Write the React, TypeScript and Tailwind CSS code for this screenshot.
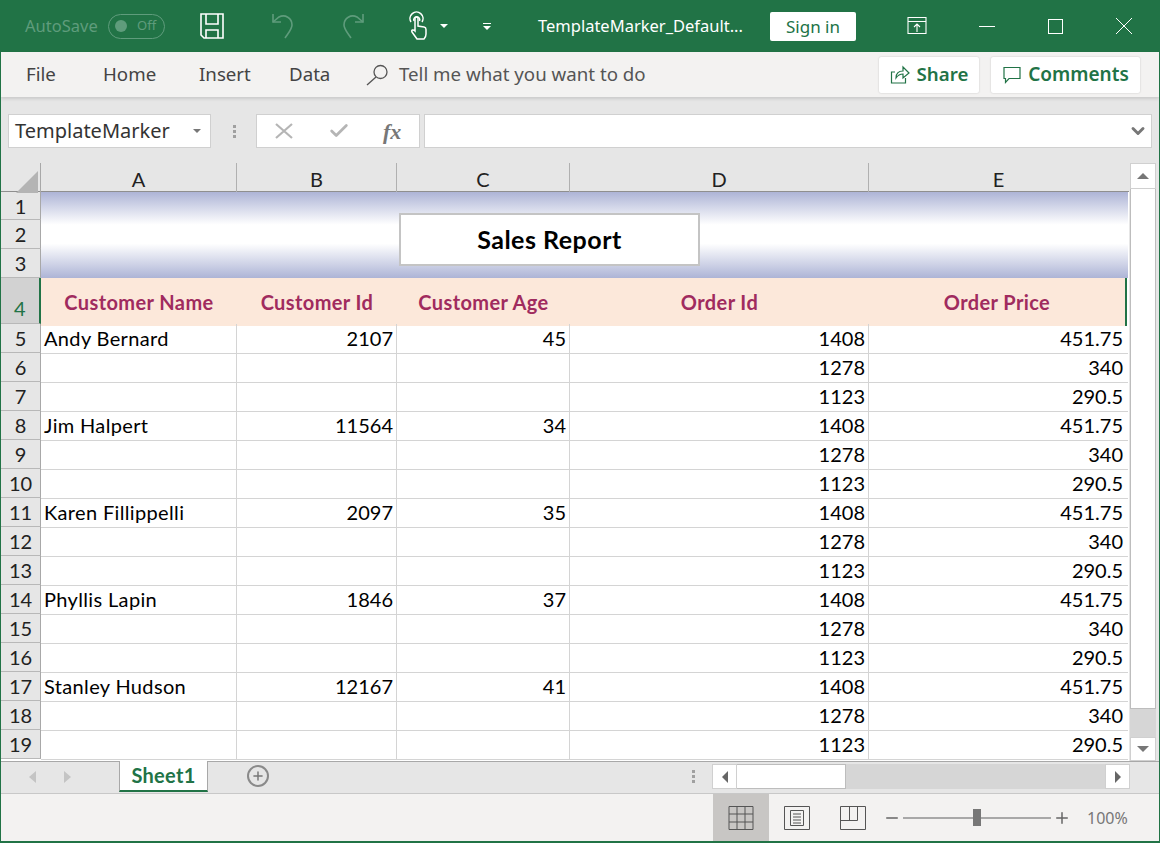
import { Check, ChevronDown, Minus, Plus } from 'lucide-react';

const ui = "font-['Noto_Sans',sans-serif]";
const cell = "font-['Lato',sans-serif]";

const people = [
  { name: 'Andy Bernard', id: '2107', age: '45' },
  { name: 'Jim Halpert', id: '11564', age: '34' },
  { name: 'Karen Fillippelli', id: '2097', age: '35' },
  { name: 'Phyllis Lapin', id: '1846', age: '37' },
  { name: 'Stanley Hudson', id: '12167', age: '41' },
];
const orders = [
  { id: '1408', price: '451.75' },
  { id: '1278', price: '340' },
  { id: '1123', price: '290.5' },
];
const rows = people.flatMap((p) =>
  orders.map((o, i) => ({
    name: i === 0 ? p.name : '',
    custId: i === 0 ? p.id : '',
    age: i === 0 ? p.age : '',
    orderId: o.id,
    price: o.price,
  })),
);

const Caret = ({ className = '' }: { className?: string }) => (
  <span className={`w-0 h-0 border-x-[4px] border-x-transparent border-t-[4px] ${className}`}></span>
);

const TitleBar = () => (
  <div className={`h-[52px] bg-[#217346] flex items-center shrink-0 text-white ${ui}`}>
    <span className="ml-[24px] w-[83px] text-[16.500px] text-[#5f9c7c] whitespace-nowrap">AutoSave</span>
    <div className="w-[57px] h-[25px] rounded-full border border-[#5f9c7c] flex items-center pl-[6px] gap-[10px]">
      <span className="w-[12px] h-[12px] rounded-full bg-[#5f9c7c]"></span>
      <span className="text-[13px] text-[#5f9c7c]">Off</span>
    </div>
    <svg className="ml-[34px]" width="26" height="28" viewBox="0 0 26 28" fill="none" stroke="white" strokeWidth="1.6">
      <path d="M2 2h22v24H5l-3-3z" />
      <path d="M7 2v10h12V2M7 26v-8h12v8" />
    </svg>
    <svg className="ml-[44px]" width="28" height="30" viewBox="0 0 28 30" fill="none" stroke="#5f9c7c" strokeWidth="1.6">
      <path d="M4 3v8h8" />
      <path d="M4 11l6-5c6-3 13 1 13 8 0 4-3 7-7 13" />
    </svg>
    <svg className="ml-[42px]" width="28" height="30" viewBox="0 0 28 30" fill="none" stroke="#5f9c7c" strokeWidth="1.6">
      <path d="M24 3v8h-8" />
      <path d="M24 11l-6-5C12 3 5 7 5 14c0 4 3 7 7 13" />
    </svg>
    <svg className="ml-[41px]" width="24" height="30" viewBox="0 0 24 30" fill="none" stroke="white" strokeWidth="1.5">
      <path d="M3 11a6.500 6.500 0 1 1 11 0" />
      <path d="M6 10a3 3 0 1 1 5.500 0" />
      <path d="M7 18V7.500a1.500 1.500 0 0 1 3 0V15l6 1c1.500.3 2 1 2 2.500V23c0 2-1 4-2 5H9l-5-7c-1-2 1-3 3-1z" />
    </svg>
    <Caret className="ml-[8px] border-t-white" />
    <div className="ml-[35px] flex flex-col items-center gap-[2px]">
      <span className="w-[8px] h-[1px] bg-white"></span>
      <Caret className="border-t-white" />
    </div>
    <span className="ml-[47px] w-[232px] text-[16.500px] whitespace-nowrap">TemplateMarker_Default...</span>
    <button className="w-[86px] h-[29px] bg-white rounded-[2px] text-[#217346] text-[17px] leading-[29px]">Sign in</button>
    <svg className="ml-[51px]" width="20" height="20" viewBox="0 0 20 20" fill="none" stroke="white" strokeWidth="1.1">
      <path d="M1 1.500h18v16H1zM1 5.500h18M10 16V8M7 11l3-3 3 3" />
    </svg>
    <span className="ml-[52px] w-[16px] h-[1px] bg-white"></span>
    <span className="ml-[53px] w-[15px] h-[15px] border border-white"></span>
    <svg className="ml-[53px]" width="16" height="16" viewBox="0 0 16 16" fill="none" stroke="white" strokeWidth="1">
      <path d="M0 0l16 16M16 0L0 16" />
    </svg>
  </div>
);

const MenuBar = () => (
  <div className={`h-[45px] bg-[#f3f2f1] flex items-center shrink-0 text-[18.700px] text-[#444444] shadow-[0_2px_3px_rgba(0,0,0,0.12)] relative z-10 ${ui}`}>
    <span className="ml-[25px] w-[77px]">File</span>
    <span className="w-[96px]">Home</span>
    <span className="w-[90px]">Insert</span>
    <span className="w-[77px]">Data</span>
    <svg width="22" height="22" viewBox="0 0 22 22" fill="none" stroke="#555555" strokeWidth="1.3">
      <circle cx="14.500" cy="8" r="6.500" />
      <path d="M10 13l-9 8" />
    </svg>
    <span className="ml-[11px] w-[480px] text-[#555555] whitespace-nowrap">Tell me what you want to do</span>
    <button className="w-[100px] h-[36px] bg-white rounded-[2px] shadow-[0_0_2px_rgba(0,0,0,0.2)] flex items-center justify-center gap-[6px] text-[#217346] font-semibold">
      <svg width="21" height="20" viewBox="0 0 21 20" fill="none" stroke="#217346" strokeWidth="1.2">
        <path d="M5 7H1.500v11h14v-5" />
        <path d="M6 13c0-5 3-7 7-7V2l6 6-6 5V9c-3 0-5 1-7 4z" />
      </svg>
      Share
    </button>
    <button className="ml-[12px] w-[149px] h-[36px] bg-white rounded-[2px] shadow-[0_0_2px_rgba(0,0,0,0.2)] flex items-center justify-center gap-[6px] text-[#217346] font-semibold text-[19px]">
      <svg width="20" height="20" viewBox="0 0 20 20" fill="none" stroke="#217346" strokeWidth="1.200">
        <path d="M2 2.500h16v11H7l-3.500 4v-4H2z" />
      </svg>
      Comments
    </button>
  </div>
);

const FormulaBar = () => (
  <div className={`h-[66px] bg-[#e6e6e6] flex items-start pt-[17px] shrink-0 ${ui}`}>
    <div className="ml-[7px] w-[203px] h-[34px] bg-white border border-[#d0d0d0] flex items-center pl-[6px] text-[20px] text-[#333333]">
      <span className="w-[178px]">TemplateMarker</span>
      <Caret className="border-t-[#777777]" />
    </div>
    <div className="ml-[21px] w-[4px] h-[34px] flex flex-col items-center justify-center gap-[2px]">
      <span className="w-[3px] h-[3px] bg-[#a0a0a0]"></span>
      <span className="w-[3px] h-[3px] bg-[#a0a0a0]"></span>
      <span className="w-[3px] h-[3px] bg-[#a0a0a0]"></span>
    </div>
    <div className="ml-[20px] w-[164px] h-[34px] bg-white border border-[#d0d0d0] flex items-center">
      <svg className="ml-[18px]" width="18" height="16" viewBox="0 0 18 16" fill="none" stroke="#b5b5b5" strokeWidth="2.200">
        <path d="M1 1l16 14M17 1L1 15" />
      </svg>
      <Check className="ml-[35px]" size={22} strokeWidth={3} color="#b5b5b5" />
      <span className="ml-[33px] font-['Liberation_Serif',serif] italic font-bold text-[22px] text-[#777777]">fx</span>
    </div>
    <div className="ml-[4px] w-[728px] h-[34px] bg-white border border-[#d0d0d0] flex items-center justify-end pr-[3px]">
      <ChevronDown size={20} strokeWidth={3.5} color="#777777" />
    </div>
  </div>
);

const RowHead = ({ n, active = false, h }: { n: number; active?: boolean; h: string }) => (
  <div
    className={`${h} flex items-center justify-center border-b border-[#b8b8b8] border-r text-[20px] font-normal ${
      active ? 'bg-[#d2d2d2] text-[#217346] border-r-[#217346] border-r-2 items-end' : 'bg-[#e6e6e6] text-[#222222] border-r-[#a8a8a8]'
    }`}
  >
    {n}
  </div>
);

const Sheet = () => (
  <div className={`w-[1128px] bg-white relative ${cell}`}>
    {/* column letters */}
    <div className="grid grid-cols-[40px_196px_160px_173px_299px_259px] h-[29px] bg-[#e6e6e6] border-b border-[#8f8f8f] text-[20px] text-[#222222] text-center leading-[32px]">
      <div className="relative border-r border-[#a8a8a8]">
        <span className="absolute right-[2px] bottom-[2px] w-0 h-0 border-l-[22px] border-l-transparent border-b-[22px] border-b-[#b4b4b4]"></span>
      </div>
      <div className="border-r border-[#b0b0b0]">A</div>
      <div className="border-r border-[#b0b0b0]">B</div>
      <div className="border-r border-[#b0b0b0]">C</div>
      <div className="border-r border-[#b0b0b0]">D</div>
      <div>E</div>
    </div>

    {/* merged banner, rows 1-3 */}
    <div className="flex h-[86px]">
      <div className="w-[40px]">
        <RowHead n={1} h="h-[28px]" />
        <RowHead n={2} h="h-[29px]" />
        <RowHead n={3} h="h-[29px]" />
      </div>
      <div className="flex-1 mr-[1px] bg-[linear-gradient(#adb4d6,#ffffff_38%,#ffffff_60%,#adb4d6)]"></div>
    </div>

    {/* header row */}
    <div className="grid grid-cols-[40px_196px_160px_173px_299px_258px] h-[46px] text-[20px] font-bold tracking-[0.4px] text-[#a02b5e] text-center leading-[48px]">
      <RowHead n={4} active h="h-[46px] pb-[1px] leading-[28px]" />
      <div className="bg-[#fce8da]">Customer Name</div>
      <div className="bg-[#fce8da]">Customer Id</div>
      <div className="bg-[#fce8da]">Customer Age</div>
      <div className="bg-[#fce8da]">Order Id</div>
      <div className="bg-[#fce8da] border-r-2 border-[#217346]">Order Price</div>
    </div>

    {/* data rows */}
    {rows.map((r, i) => (
      <div key={i} className="grid grid-cols-[40px_196px_160px_173px_299px_259px] h-[29px] text-[20px] text-black leading-[29px]">
        <RowHead n={i + 5} h="h-[29px]" />
        <div className="border-r border-b border-[#d4d4d4] pl-[3px] whitespace-nowrap tracking-[0.35px]">{r.name}</div>
        <div className="border-r border-b border-[#d4d4d4] pr-[3px] text-right">{r.custId}</div>
        <div className="border-r border-b border-[#d4d4d4] pr-[3px] text-right">{r.age}</div>
        <div className="border-r border-b border-[#d4d4d4] pr-[3px] text-right">{r.orderId}</div>
        <div className="border-b border-[#d4d4d4] pr-[5px] text-right">{r.price}</div>
      </div>
    ))}

    {/* title text box floating over the sheet */}
    <div className="absolute left-[398px] top-[50px] w-[301px] h-[53px] bg-white border-2 border-[#c4c4c4] flex items-center justify-center text-[25px] font-bold tracking-[0.5px] text-black">
      Sales Report
    </div>
  </div>
);

const VScroll = () => (
  <div className="w-[30px] bg-[#e6e6e6] flex flex-col pl-[1px] pr-[3px]">
    <div className="h-[26px] bg-white border border-[#d0d0d0] flex items-center justify-center">
      <span className="w-0 h-0 border-x-[6px] border-x-transparent border-b-[6px] border-b-[#777777]"></span>
    </div>
    <div className="h-[520px] bg-white border-x border-b border-[#bdbdbd]"></div>
    <div className="flex-1 bg-[#d6d6d6]"></div>
    <div className="h-[24px] bg-white border border-[#d0d0d0] flex items-center justify-center">
      <span className="w-0 h-0 border-x-[6px] border-x-transparent border-t-[6px] border-t-[#777777]"></span>
    </div>
  </div>
);

const TabsBar = () => (
  <div className={`h-[33px] bg-[#e6e6e6] border-t border-[#a8a8a8] border-b border-b-[#c8c8c8] flex items-start shrink-0 ${ui}`}>
    <span className="mt-[9px] ml-[28px] w-0 h-0 border-y-[6px] border-y-transparent border-r-[7px] border-r-[#c4c4c4]"></span>
    <span className="mt-[9px] ml-[28px] w-0 h-0 border-y-[6px] border-y-transparent border-l-[7px] border-l-[#c4c4c4]"></span>
    <div className={`ml-[48px] -mt-[1px] w-[89px] h-[31px] bg-white border-x border-[#a8a8a8] border-b-2 border-b-[#217346] text-center text-[20px] font-bold tracking-[0.3px] text-[#217346] leading-[28px] ${cell}`}>
      Sheet1
    </div>
    <div className="ml-[39px] mt-[3px] w-[22px] h-[22px] rounded-full border-2 border-[#8a8a8a] flex items-center justify-center">
      <Plus size={14} strokeWidth={2.5} color="#777777" />
    </div>
    <div className="ml-[423px] mt-[8px] w-[3px] flex flex-col gap-[2px]">
      <span className="w-[3px] h-[3px] bg-[#a0a0a0]"></span>
      <span className="w-[3px] h-[3px] bg-[#a0a0a0]"></span>
      <span className="w-[3px] h-[3px] bg-[#a0a0a0]"></span>
    </div>
    <div className="ml-[17px] mt-[2px] w-[418px] h-[25px] bg-[#d6d6d6] flex">
      <div className="w-[25px] bg-white border border-[#d0d0d0] flex items-center justify-center">
        <span className="w-0 h-0 border-y-[6px] border-y-transparent border-r-[6px] border-r-[#666666]"></span>
      </div>
      <div className="w-[109px] bg-white border-y border-r border-[#bdbdbd]"></div>
      <div className="flex-1"></div>
      <div className="w-[25px] bg-white border border-[#d0d0d0] flex items-center justify-center">
        <span className="w-0 h-0 border-y-[6px] border-y-transparent border-l-[6px] border-l-[#666666]"></span>
      </div>
    </div>
  </div>
);

const StatusBar = () => (
  <div className={`flex-1 bg-[#f3f2f1] flex items-stretch text-[#666666] ${ui}`}>
    <div className="ml-[712px] w-[56px] bg-[#c8c6c4] flex items-center justify-center">
      <svg width="26" height="26" viewBox="0 0 26 26" fill="none" stroke="#555555" strokeWidth="1">
        <path d="M1 1.500h24v23H1zM1 9h24M1 17h24M9 1.500v23M17 1.500v23" />
      </svg>
    </div>
    <div className="ml-[15px] flex items-center">
      <svg width="26" height="24" viewBox="0 0 26 24" fill="none" stroke="#555555" strokeWidth="1">
        <path d="M.5.500h25v23H.5zM6.500 4.500h13v15h-13zM9 8h8M9 11h8M9 14h8M9 17h8" />
      </svg>
    </div>
    <div className="ml-[30px] flex items-center">
      <svg width="26" height="24" viewBox="0 0 26 24" fill="none" stroke="#555555" strokeWidth="1">
        <path d="M.5.500h25v23H.5zM.5 14.500h17M17.500.500v14M9.500.500v14" />
      </svg>
    </div>
    <div className="ml-[17px] flex items-center">
      <Minus size={18} strokeWidth={2} color="#666666" />
      <div className="ml-[2px] relative w-[148px] h-[2px] bg-[#a8a8a8]">
        <span className="absolute left-[70px] -top-[8px] w-[8px] h-[17px] bg-[#777777]"></span>
      </div>
      <Plus className="ml-[2px]" size={18} strokeWidth={2} color="#666666" />
      <span className="ml-[16px] text-[16px] text-[#777777]">100%</span>
    </div>
  </div>
);

export default function App() {
  return (
    <div className="w-[1160px] h-[843px] flex flex-col overflow-hidden bg-[#f3f2f1] border-x border-b-2 border-[#217346]">
      <TitleBar />
      <MenuBar />
      <FormulaBar />
      <div className="flex h-[598px] shrink-0 bg-[#e6e6e6] overflow-hidden">
        <Sheet />
        <VScroll />
      </div>
      <TabsBar />
      <StatusBar />
    </div>
  );
}
